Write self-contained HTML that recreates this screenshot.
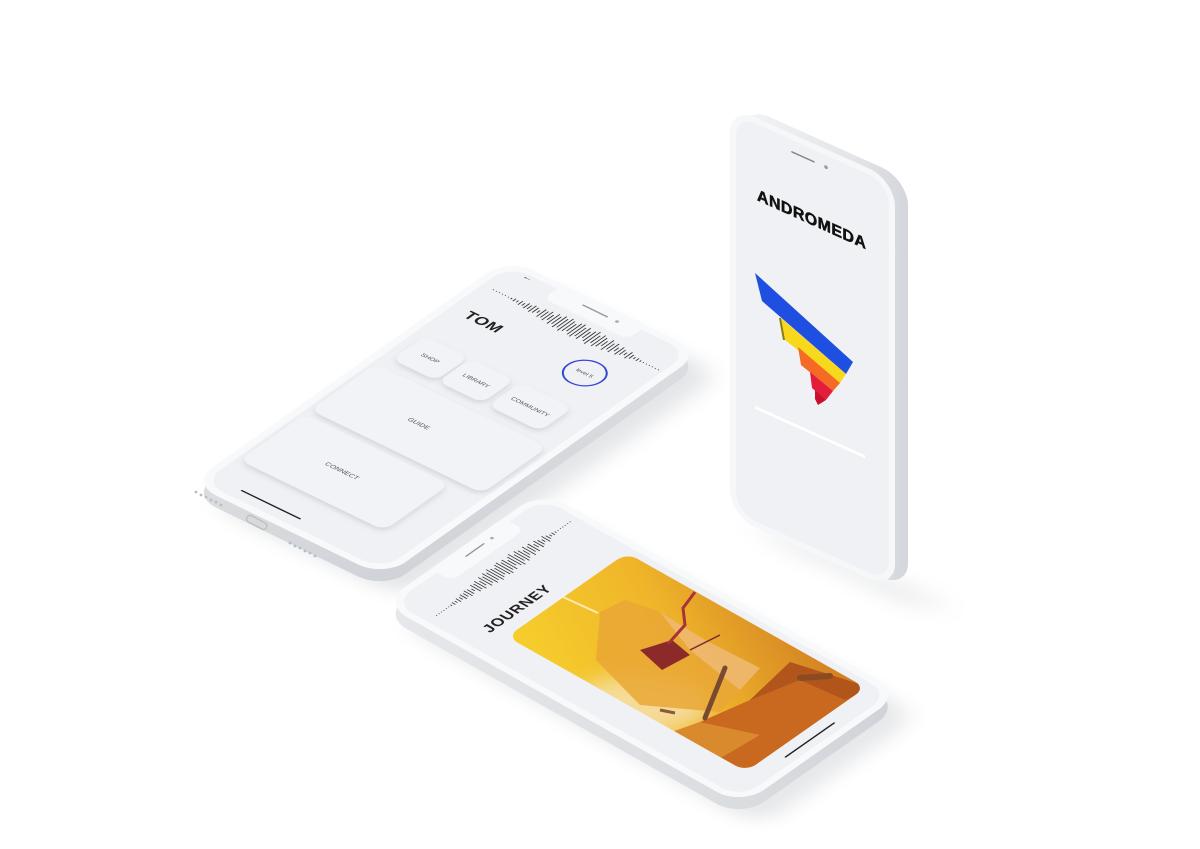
<!DOCTYPE html>
<html><head><meta charset="utf-8"><style>
html,body{margin:0;padding:0;background:#fff;width:1200px;height:849px;overflow:hidden}
svg{display:block}
text{font-family:"Liberation Sans",Arial,sans-serif}
</style></head><body>
<svg width="1200" height="849" viewBox="0 0 1200 849" xmlns="http://www.w3.org/2000/svg">
<defs>
<filter id="blur" x="-50%" y="-50%" width="200%" height="200%"><feGaussianBlur stdDeviation="10"/></filter>
<filter id="blur2" x="-50%" y="-50%" width="200%" height="200%"><feGaussianBlur stdDeviation="3"/></filter>
<filter id="btn" x="-40%" y="-40%" width="180%" height="180%"><feDropShadow dx="2" dy="3" stdDeviation="3" flood-color="#9aa3b5" flood-opacity="0.35"/></filter>
<path id="wave" fill="none" stroke="#333" stroke-width="0.9" d="M18 39.5v1M21 39.5v1M24 39.5v1M27 39.5v1M30 39.5v1M33 39.5v1M36 39v2M39 38v4M42 38.5v3M45 37v6M48 38v4M51 36v8M54 37v6M57 35v10M60 36v8M63 38v4M66 34v12M69 35v10M72 33v14M75 36v8M78 32v16M81 34v12M84 31v18M87 33v14M90 30v20M93 32v16M96 34v12M99 31v18M102 30v20M105 33v14M108 31v18M111 35v10M114 32v16M117 30v20M120 34v12M123 31v18M126 33v14M129 36v8M132 32v16M135 35v10M138 33v14M141 37v6M144 34v12M147 36v8M150 38v4M153 35v10M156 37v6M159 38.5v3M162 38v4M165 39v2M168 39.5v1M171 39.5v1M174 39.5v1M177 39.5v1M180 39.5v1M183 39.5v1"/>
<linearGradient id="side" x1="0" y1="0" x2="1" y2="1"><stop offset="0" stop-color="#e6e8eb"/><stop offset="1" stop-color="#cfd2d6"/></linearGradient>
<linearGradient id="sideV" x1="0" y1="0" x2="1" y2="0"><stop offset="0" stop-color="#f3f4f6"/><stop offset="0.7" stop-color="#e2e4e7"/><stop offset="1" stop-color="#d3d6da"/></linearGradient>
<linearGradient id="art" x1="0" y1="0" x2="1" y2="1"><stop offset="0" stop-color="#f7cf2c"/><stop offset="0.5" stop-color="#efb52a"/><stop offset="1" stop-color="#d07a22"/></linearGradient>
<clipPath id="imgclip"><rect transform="matrix(0.809,-0.567,0.872,0.492,382,603)" x="36" y="110" width="148" height="274" rx="12"/></clipPath>
</defs>

<!-- floor shadows -->
<g transform="matrix(1,0.485,-0.815,0.577,528,280)" opacity="0.18" filter="url(#blur)"><rect width="194" height="390" rx="26" fill="#6b7280"/></g>
<g transform="matrix(0.809,-0.567,0.872,0.492,400,625)" opacity="0.16" filter="url(#blur)"><rect width="198" height="412" rx="28" fill="#6b7280"/></g>
<polygon points="740,525 900,600 960,610 800,540" fill="#7a808a" opacity="0.18" filter="url(#blur)"/>

<!-- PHONE 1 -->
<g transform="translate(0,12)"><g transform="matrix(1,0.485,-0.815,0.577,508,258)"><rect width="194" height="390" rx="26" fill="url(#side)"/></g></g>
<g transform="matrix(1,0.485,-0.815,0.577,508,258)">
<rect width="194" height="390" rx="26" fill="#f8f9fa"/>
<rect x="7" y="7" width="180" height="376" rx="20" fill="#eff1f4"/>
<rect x="55" y="0" width="84" height="24" rx="8" fill="#f8f9fa"/>
<line x1="84" y1="11" x2="108" y2="11" stroke="#999" stroke-width="1.6" stroke-linecap="round"/>
<circle cx="118" cy="11" r="1.6" fill="#aaa"/>
<use href="#wave"/>
<text x="24" y="13" font-size="9" fill="#444">←</text>
<text x="22" y="83" font-size="15" font-weight="bold" fill="#222" letter-spacing="0.5">TOM</text>
<ellipse cx="142" cy="80" rx="17" ry="17" fill="none" stroke="#3347d6" stroke-width="1.6"/>
<text x="142" y="82" font-size="5.5" fill="#555" text-anchor="middle">level 5</text>
<rect x="16" y="122" width="44" height="40" rx="9" fill="#f2f3f6" filter="url(#btn)"/>
<rect x="62" y="122" width="44" height="40" rx="9" fill="#f2f3f6" filter="url(#btn)"/>
<rect x="112" y="122" width="52" height="40" rx="9" fill="#f2f3f6" filter="url(#btn)"/>
<text x="38" y="144" font-size="6" fill="#555" text-anchor="middle">SHOP</text>
<text x="84" y="144" font-size="6" fill="#555" text-anchor="middle">LIBRARY</text>
<text x="138" y="144" font-size="6" fill="#555" text-anchor="middle">COMMUNITY</text>
<rect x="10" y="175" width="172" height="80" rx="10" fill="#f2f3f6" filter="url(#btn)"/>
<text x="86" y="217" font-size="6.5" fill="#555" text-anchor="middle">GUIDE</text>
<rect x="10" y="262" width="145" height="80" rx="10" fill="#f2f3f6" filter="url(#btn)"/>
<text x="80" y="304" font-size="6.5" fill="#555" text-anchor="middle">CONNECT</text>
<line x1="37" y1="372" x2="95" y2="372" stroke="#222" stroke-width="1.6" stroke-linecap="round"/>
</g>
<g fill="#b9bcc1">
<circle cx="196" cy="492" r="1.4"/><circle cx="201" cy="495" r="1.4"/><circle cx="206" cy="497" r="1.4"/><circle cx="211" cy="500" r="1.4"/><circle cx="216" cy="502" r="1.4"/><circle cx="221" cy="505" r="1.4"/>
<circle cx="290" cy="543" r="1.4"/><circle cx="295" cy="546" r="1.4"/><circle cx="300" cy="548" r="1.4"/><circle cx="305" cy="551" r="1.4"/><circle cx="310" cy="553" r="1.4"/><circle cx="315" cy="556" r="1.4"/>
</g>
<rect x="246" y="519" width="22" height="7" rx="3.5" fill="none" stroke="#bbb" stroke-width="1.2" transform="rotate(28 257 522)"/>

<!-- STANDING PHONE -->
<g transform="translate(13,-1)"><g transform="matrix(1,0.45,0,1,730,106)"><rect width="165" height="410" rx="26" fill="url(#sideV)"/></g></g>
<g transform="matrix(1,0.45,0,1,730,106)">
<rect width="165" height="410" rx="26" fill="#f6f7f9"/>
<rect x="6" y="6" width="153" height="398" rx="20" fill="#eff1f4"/>
<line x1="62" y1="18" x2="84" y2="18" stroke="#888" stroke-width="1.6" stroke-linecap="round"/>
<circle cx="96" cy="18" r="1.8" fill="#999"/>
<text x="27" y="82" font-size="16" font-weight="900" fill="#111" stroke="#111" stroke-width="0.5" letter-spacing="0.4">ANDROMEDA</text>
<line x1="25" y1="290" x2="135" y2="290" stroke="#ffffff" stroke-width="3"/>
<line x1="25" y1="294" x2="135" y2="294" stroke="#e3e5e9" stroke-width="2" filter="url(#blur2)"/>
</g>
<polygon points="755,273 853,362 846,374 762,301" fill="#1f4fe0"/>
<polygon points="781,318 846,374 840,383 785,340" fill="#f8d81c"/>
<polygon points="781,318 785,340 783,340 779,318" fill="#8a7a10"/>
<polygon points="798,347 840,383 833,391 801,365" fill="#f56a24"/>
<polygon points="810,372 833,391 826,400 812,388" fill="#e31e3c"/>
<polygon points="815,390 826,400 818,405 815,399" fill="#c8102e"/>

<!-- PHONE 3 -->
<g transform="translate(0,12)"><g transform="matrix(0.809,-0.567,0.872,0.492,382,603)"><rect width="198" height="412" rx="28" fill="url(#side)"/></g></g>
<g transform="matrix(0.809,-0.567,0.872,0.492,382,603)">
<rect width="198" height="412" rx="28" fill="#f8f9fa"/>
<rect x="7" y="7" width="184" height="398" rx="21" fill="#eff1f4"/>
<rect x="60" y="0" width="90" height="24" rx="8" fill="#f8f9fa"/>
<line x1="92" y1="11" x2="114" y2="11" stroke="#999" stroke-width="1.6" stroke-linecap="round"/>
<circle cx="124" cy="11" r="1.6" fill="#aaa"/>
<use href="#wave" transform="translate(0,6)"/>
<text x="30" y="96" font-size="15" font-weight="bold" fill="#222" letter-spacing="0.8">JOURNEY</text>
<rect x="36" y="110" width="148" height="274" rx="12" fill="url(#art)"/>
<line x1="72" y1="396" x2="132" y2="396" stroke="#222" stroke-width="1.6" stroke-linecap="round"/>
</g>
<g clip-path="url(#imgclip)">
<ellipse cx="640" cy="705" rx="70" ry="30" fill="#f6e2b4" opacity="0.8" filter="url(#blur)"/>
<polygon points="600,612 625,600 660,612 705,640 760,668 720,712 640,705 596,660" fill="#e9a735" opacity="0.85"/>
<polygon points="660,612 705,640 760,668 740,690 690,650" fill="#f3c6a0" opacity="0.5"/>
<polygon points="650,740 700,722 750,700 790,662 872,688 862,720 790,768 700,770" fill="#c9681f"/>
<polygon points="750,700 790,662 872,688 845,700 800,680" fill="#b2551a"/>
<polygon points="650,740 700,722 760,735 700,770" fill="#d98a2c"/>
<line x1="725" y1="668" x2="705" y2="718" stroke="#7a4a30" stroke-width="5" stroke-linecap="round"/>
<line x1="800" y1="678" x2="830" y2="676" stroke="#8a4a22" stroke-width="6" stroke-linecap="round"/>
<line x1="660" y1="710" x2="675" y2="713" stroke="#8a5a3a" stroke-width="3"/>
<polygon points="640,650 672,640 690,655 662,670" fill="#8c2a2a"/>
<polyline points="668,644 685,625 683,608 695,592" fill="none" stroke="#a8323a" stroke-width="3"/>
<line x1="690" y1="650" x2="720" y2="635" stroke="#7a2a2a" stroke-width="1.5"/>
<line x1="563" y1="597" x2="598" y2="613" stroke="#fff6d0" stroke-width="2" opacity="0.8"/>
</g>
</svg>
</body></html>
